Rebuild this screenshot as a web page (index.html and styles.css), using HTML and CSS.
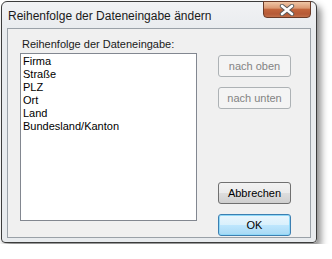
FILE: index.html
```html
<!DOCTYPE html>
<html lang="de">
<head>
  <meta charset="UTF-8">
  <title>Reihenfolge der Dateneingabe ändern</title>
  <link rel="stylesheet" href="styles.css">
</head>
<body>
  <div class="window">
    <div class="titlebar">
      <span class="title">Reihenfolge der Dateneingabe ändern</span>
      <button class="close-button" title="Schließen">
        <svg width="18" height="12" viewBox="0 0 18 12">
          <path d="M4 2 L14 10 M14 2 L4 10" stroke="#5a5a5a" stroke-width="4.4" stroke-linecap="round" fill="none"/>
          <path d="M4 2 L14 10 M14 2 L4 10" stroke="#ffffff" stroke-width="2.6" stroke-linecap="round" fill="none"/>
        </svg>
      </button>
    </div>

    <div class="client">
      <div class="list-column">
        <div class="list-label">Reihenfolge der Dateneingabe:</div>
        <ul class="listbox">
          <li>Firma</li>
          <li>Straße</li>
          <li>PLZ</li>
          <li>Ort</li>
          <li>Land</li>
          <li>Bundesland/Kanton</li>
        </ul>
      </div>

      <div class="button-column">
        <button class="btn" disabled>nach oben</button>
        <button class="btn" disabled>nach unten</button>
        <button class="btn btn-cancel">Abbrechen</button>
        <button class="btn btn-default">OK</button>
      </div>
    </div>
  </div>
</body>
</html>
```

FILE: styles.css
```css
body {
  margin: 0;
  padding: 1px;
  background-color: #fff;
  font-family: "Liberation Sans", Arial, sans-serif;
}

.window {
  display: flex;
  flex-direction: column;
  width: 314px;
  height: 240px;
  border: 1px solid #3c3c3c;
  border-radius: 6px 6px 4px 4px;
  background: linear-gradient(#f1f2f4, #e8ebee 30px);
  box-shadow: 4px 5px 7px rgba(0, 0, 0, 0.45);
}

.titlebar {
  display: flex;
  align-items: flex-start;
  height: 26px;
  padding-left: 6px;
}

.title {
  padding-top: 7px;
  font-size: 12px;
  line-height: 14px;
  color: #1a1a1a;
}

.close-button {
  display: flex;
  align-items: center;
  justify-content: center;
  width: 48px;
  height: 17px;
  margin: -1px 5px 0 auto;
  padding: 0;
  border: 1px solid #6b3b28;
  border-radius: 0 0 4px 4px;
  background: linear-gradient(#efc6a6, #dc9a74 40%, #c2653c 50%, #b65a36 80%, #c2704a);
}

.client {
  display: flex;
  flex: 1;
  margin: 0 5px 4px 5px;
  padding: 8px 12px 0 12px;
  border: 1px solid #9aa1a8;
  background-color: #f0f0f0;
}

.list-column {
  display: flex;
  flex-direction: column;
  width: 177px;
}

.list-label {
  height: 16px;
  padding-left: 2px;
  font-size: 11px;
  line-height: 14px;
  color: #1a1a1a;
}

.listbox {
  height: 164px;
  margin: 0;
  padding: 1px 2px;
  list-style: none;
  border: 1px solid #828790;
  background-color: #fff;
}

.listbox li {
  font-size: 11px;
  line-height: 13px;
  color: #000;
}

.button-column {
  display: flex;
  flex-direction: column;
  gap: 10px;
  width: 73px;
  margin-left: 21px;
  padding: 18px 0 1px 0;
}

.btn {
  height: 22px;
  padding: 0;
  border: 1px solid #707070;
  border-radius: 3px;
  background: linear-gradient(#f2f2f2, #ebebeb 50%, #dddddd 51%, #cfcfcf);
  font-family: "Liberation Sans", Arial, sans-serif;
  font-size: 11px;
  color: #000;
}

.btn:disabled {
  border-color: #adb2b5;
  background: #f4f4f4;
  color: #838383;
}

.btn-cancel {
  margin-top: auto;
}

.btn-default {
  border-color: #3c7fb1;
  background: linear-gradient(#eaf6fd, #d9f0fc 50%, #bee6fd 51%, #a7d9f5);
  box-shadow: inset 0 0 0 1px #8fd8f8;
}
```
